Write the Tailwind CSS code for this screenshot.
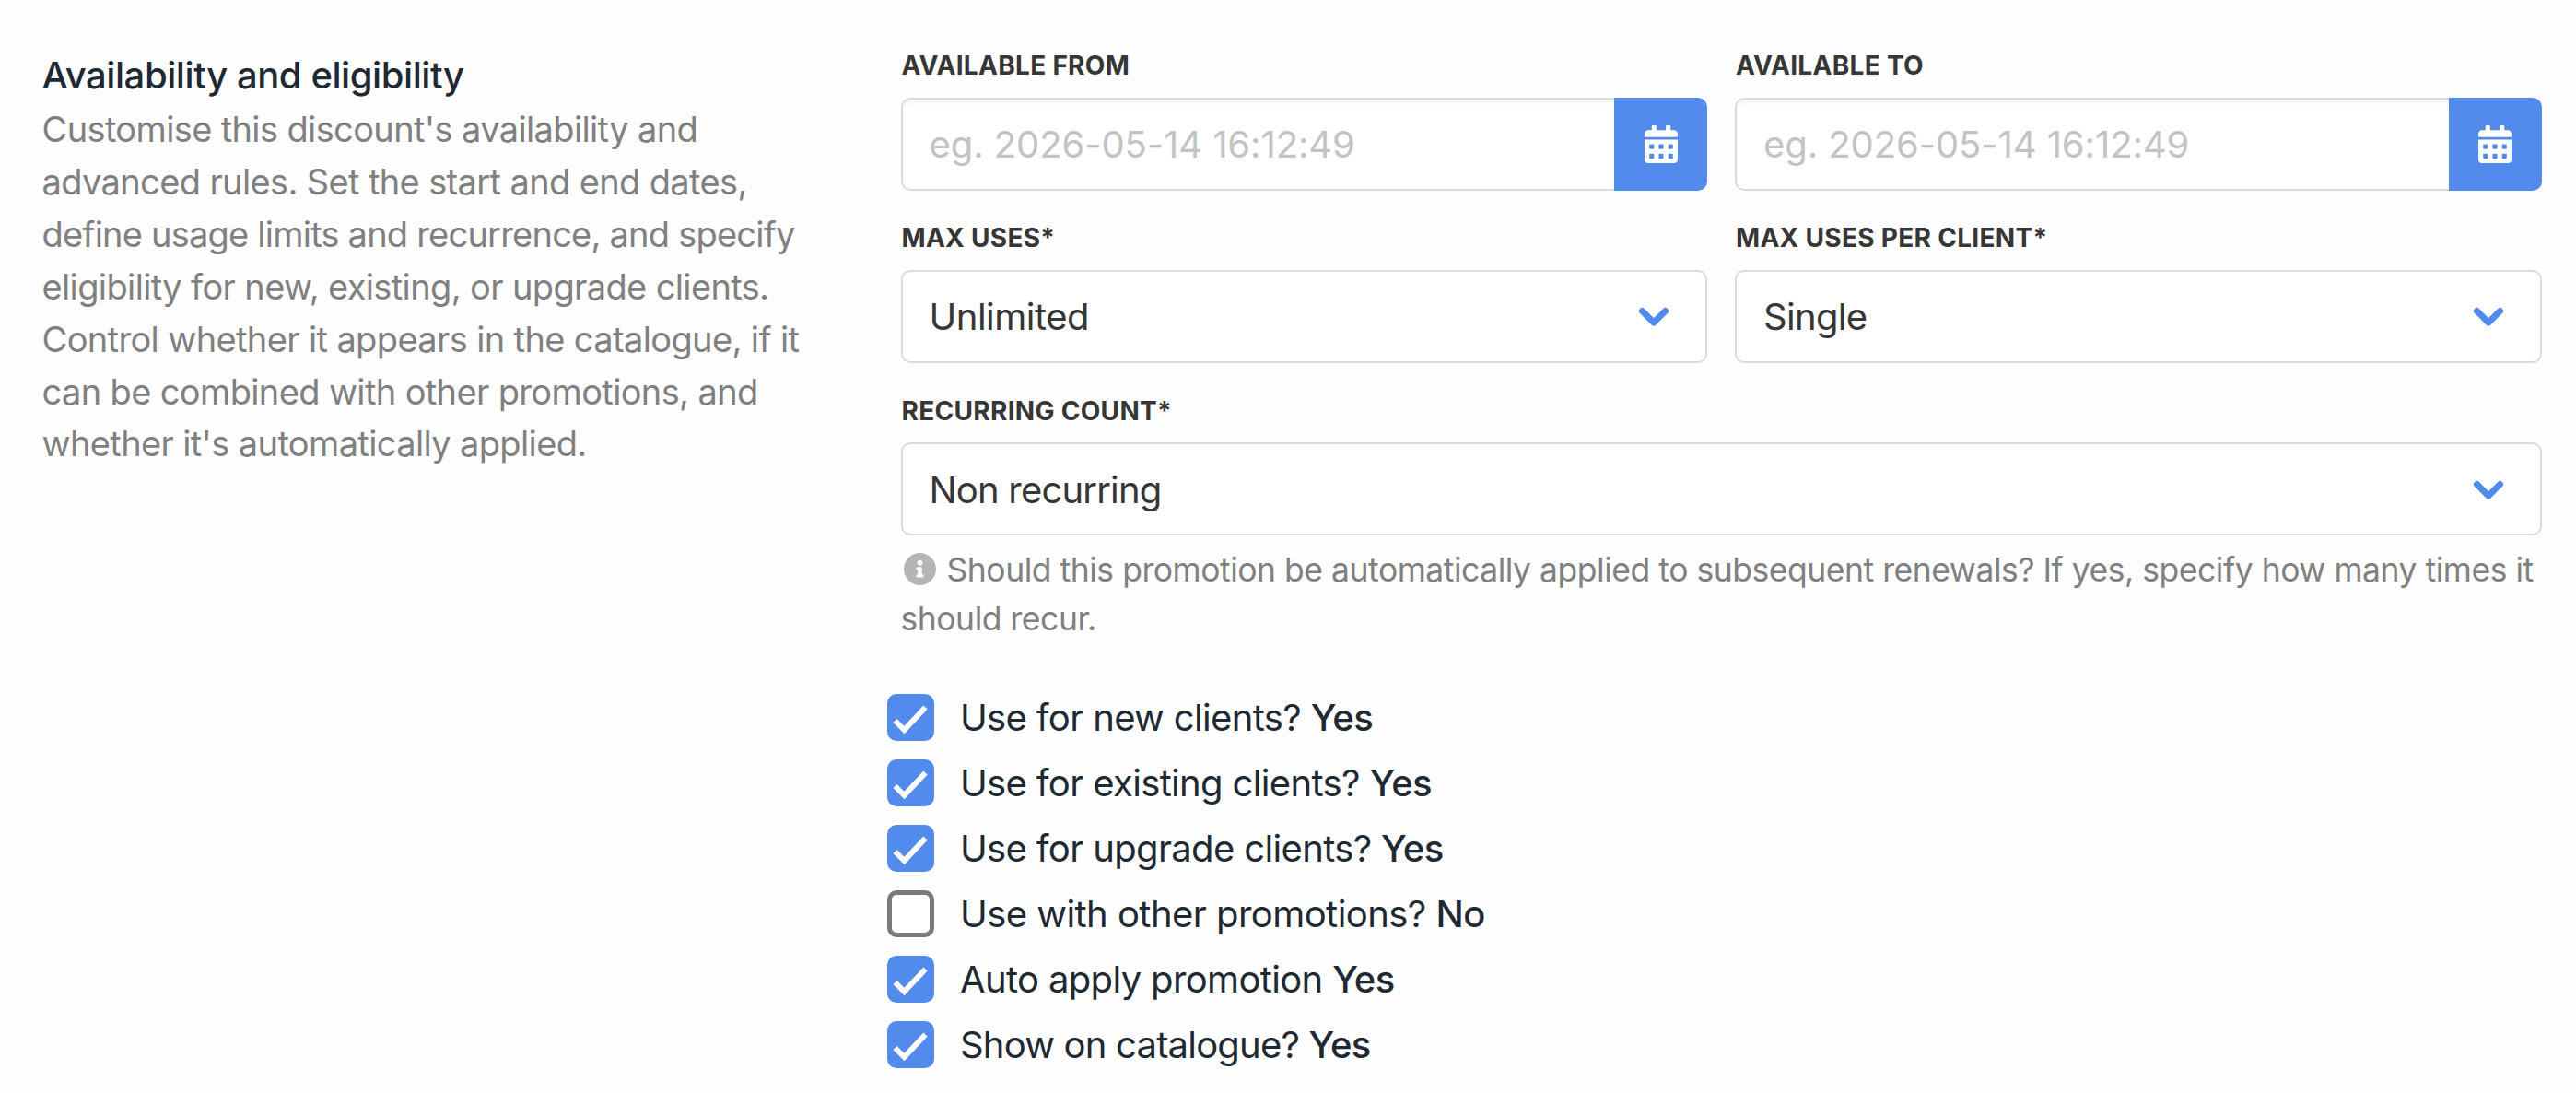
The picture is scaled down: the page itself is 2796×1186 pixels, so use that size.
<!DOCTYPE html>
<html lang="en">
<head>
    <meta charset="UTF-8">
    <meta name="viewport" content="width=device-width, initial-scale=1.0">
    <title>Availability and eligibility</title>
    <script src="https://cdn.jsdelivr.net/npm/@tailwindcss/browser@4"></script>
</head>
<body class="bg-[#fefefe] font-['Inter',sans-serif] antialiased">
    <svg class="hidden">
        <symbol id="calendar" viewBox="0 0 448 512">
            <path d="M0 464c0 26.5 21.5 48 48 48h352c26.5 0 48-21.5 48-48V192H0v272zm320-196c0-6.6 5.4-12 12-12h40c6.6 0 12 5.4 12 12v40c0 6.6-5.4 12-12 12h-40c-6.6 0-12-5.4-12-12v-40zm0 128c0-6.6 5.4-12 12-12h40c6.6 0 12 5.4 12 12v40c0 6.6-5.4 12-12 12h-40c-6.6 0-12-5.4-12-12v-40zM192 268c0-6.6 5.4-12 12-12h40c6.6 0 12 5.4 12 12v40c0 6.6-5.4 12-12 12h-40c-6.6 0-12-5.4-12-12v-40zm0 128c0-6.6 5.4-12 12-12h40c6.6 0 12 5.4 12 12v40c0 6.6-5.4 12-12 12h-40c-6.6 0-12-5.4-12-12v-40zM64 268c0-6.6 5.4-12 12-12h40c6.6 0 12 5.4 12 12v40c0 6.6-5.4 12-12 12H76c-6.6 0-12-5.4-12-12v-40zm0 128c0-6.6 5.4-12 12-12h40c6.6 0 12 5.4 12 12v40c0 6.6-5.4 12-12 12H76c-6.6 0-12-5.4-12-12v-40zM400 64h-48V16c0-8.8-7.2-16-16-16h-32c-8.8 0-16 7.2-16 16v48H160V16c0-8.8-7.2-16-16-16h-32c-8.8 0-16 7.2-16 16v48H48C21.5 64 0 85.5 0 112v48h448v-48c0-26.5-21.5-48-48-48z"/>
        </symbol>
        <symbol id="chevron" viewBox="0 0 34 22">
            <path d="M4.500 4.500 17 17 29.500 4.500" fill="none" stroke="currentColor" stroke-width="7" stroke-linecap="round" stroke-linejoin="round"/>
        </symbol>
        <symbol id="check" viewBox="0 0 51 51">
            <path d="M8.500 29 18.500 39 41.500 14.500" fill="none" stroke="currentColor" stroke-width="6"/>
        </symbol>
    </svg>

    <div class="flex h-[1186px] pl-[45.5px] pr-[37.5px]">
        <div class="w-[932px] shrink-0 pt-[53px]">
            <h2 class="text-[40px] leading-[57px] font-medium tracking-[-0.43px] text-[#1f2933]">Availability and eligibility</h2>
            <p class="pt-[2px] text-[38px] leading-[56.9px] tracking-[-0.63px] text-[#808080]">
                Customise this discount's availability and<br>
                advanced rules. Set the start and end dates,<br>
                <span class="tracking-[-0.78px]">define usage limits and recurrence, and specify</span><br>
                eligibility for new, existing, or upgrade clients.<br>
                Control whether it appears in the catalogue, if it<br>
                can be combined with other promotions, and<br>
                whether it's automatically applied.
            </p>
        </div>

        <div class="flex-1">
            <div class="grid grid-cols-2 gap-x-[30px] pt-[51px]">
                <div class="h-[187.3px]">
                    <label class="block h-[54.5px] pl-[1px] text-[28px] leading-[41px] font-bold tracking-[0.3px] text-[#363636]">AVAILABLE FROM</label>
                    <div class="flex h-[101px]">
                        <div class="flex flex-1 items-center rounded-l-[10px] border-2 border-r-0 border-[#dbdbdb] bg-white pt-[2px] pl-[29px] text-[40px] tracking-[-0.1px] text-[#c3c3c3] shadow-[inset_0_3px_5px_rgba(10,10,10,0.05)]">eg. 2026-05-14 16:12:49</div>
                        <button class="flex w-[101px] items-center justify-center rounded-r-[10px] bg-[#528bec] text-white"><svg class="h-[41px] w-[36px] fill-current"><use href="#calendar"/></svg></button>
                    </div>
                </div>
                <div class="h-[187.3px]">
                    <label class="block h-[54.5px] pl-[1px] text-[28px] leading-[41px] font-bold tracking-[0.3px] text-[#363636]">AVAILABLE TO</label>
                    <div class="flex h-[101px]">
                        <div class="flex flex-1 items-center rounded-l-[10px] border-2 border-r-0 border-[#dbdbdb] bg-white pt-[2px] pl-[29px] text-[40px] tracking-[-0.1px] text-[#c3c3c3] shadow-[inset_0_3px_5px_rgba(10,10,10,0.05)]">eg. 2026-05-14 16:12:49</div>
                        <button class="flex w-[101px] items-center justify-center rounded-r-[10px] bg-[#528bec] text-white"><svg class="h-[41px] w-[36px] fill-current"><use href="#calendar"/></svg></button>
                    </div>
                </div>
                <div class="h-[187.3px]">
                    <label class="block h-[54.5px] pl-[1px] text-[28px] leading-[41px] font-bold tracking-[0.3px] text-[#363636]">MAX USES*</label>
                    <div class="flex h-[101px] items-center justify-between rounded-[10px] border-2 border-[#dbdbdb] bg-white pt-[2px] pr-[39px] pl-[29px] text-[40px] tracking-[-0.5px] text-[#363636]">
                        Unlimited<svg class="h-[22px] w-[34px] text-[#528bec]"><use href="#chevron"/></svg>
                    </div>
                </div>
                <div class="h-[187.3px]">
                    <label class="block h-[54.5px] pl-[1px] text-[28px] leading-[41px] font-bold tracking-[0.3px] text-[#363636]">MAX USES PER CLIENT*</label>
                    <div class="flex h-[101px] items-center justify-between rounded-[10px] border-2 border-[#dbdbdb] bg-white pt-[2px] pr-[39px] pl-[29px] text-[40px] tracking-[-0.7px] text-[#363636]">
                        Single<svg class="h-[22px] w-[34px] text-[#528bec]"><use href="#chevron"/></svg>
                    </div>
                </div>
                <div class="col-span-2">
                    <label class="block h-[54.5px] pl-[1px] text-[28px] leading-[41px] font-bold tracking-[0.3px] text-[#363636]">RECURRING COUNT*</label>
                    <div class="flex h-[101px] items-center justify-between rounded-[10px] border-2 border-[#dbdbdb] bg-white pt-[2px] pr-[39px] pl-[29px] text-[40px] tracking-[-0.8px] text-[#363636]">
                        Non recurring<svg class="h-[22px] w-[34px] text-[#528bec]"><use href="#chevron"/></svg>
                    </div>
                    <div class="pt-[10.5px] text-[35.5px] leading-[53.3px] tracking-[-0.47px] whitespace-nowrap text-[#808080]">
                        <svg class="mr-[12px] ml-[3px] inline-block size-[35px] align-[-4px] text-[#b5b5b5]" viewBox="8 8 496 496" fill="currentColor"><path d="M256 8C119.043 8 8 119.083 8 256c0 136.997 111.043 248 248 248s248-111.003 248-248C504 119.083 392.957 8 256 8zm0 110c23.196 0 42 18.804 42 42s-18.804 42-42 42-42-18.804-42-42 18.804-42 42-42zm56 254c0 6.627-5.373 12-12 12h-88c-6.627 0-12-5.373-12-12v-24c0-6.627 5.373-12 12-12h12v-64h-12c-6.627 0-12-5.373-12-12v-24c0-6.627 5.373-12 12-12h64c6.627 0 12 5.373 12 12v100h12c6.627 0 12 5.373 12 12v24z"/></svg>Should this promotion be automatically applied to subsequent renewals? If yes, specify how many times it<br>
                        should recur.
                    </div>
                </div>
            </div>

            <div class="-ml-[15px] pt-[45px] text-[40px] leading-[71px] tracking-[-0.65px] text-[#1f2933]">
                <div class="flex h-[71px] items-center">
                    <span class="mr-[28.5px] size-[51px] rounded-[10px] bg-[#528bec] text-white"><svg class="size-full"><use href="#check"/></svg></span>
                    <span>Use for new clients? <span class="font-medium">Yes</span></span>
                </div>
                <div class="flex h-[71px] items-center">
                    <span class="mr-[28.5px] size-[51px] rounded-[10px] bg-[#528bec] text-white"><svg class="size-full"><use href="#check"/></svg></span>
                    <span>Use for existing clients? <span class="font-medium">Yes</span></span>
                </div>
                <div class="flex h-[71px] items-center">
                    <span class="mr-[28.5px] size-[51px] rounded-[10px] bg-[#528bec] text-white"><svg class="size-full"><use href="#check"/></svg></span>
                    <span>Use for upgrade clients? <span class="font-medium">Yes</span></span>
                </div>
                <div class="flex h-[71px] items-center">
                    <span class="mr-[28.5px] size-[51px] rounded-[10px] border-[5px] border-[#7a7a7a] bg-white"></span>
                    <span class="tracking-[-0.55px]">Use with other promotions? <span class="font-medium">No</span></span>
                </div>
                <div class="flex h-[71px] items-center">
                    <span class="mr-[28.5px] size-[51px] rounded-[10px] bg-[#528bec] text-white"><svg class="size-full"><use href="#check"/></svg></span>
                    <span>Auto apply promotion <span class="font-medium">Yes</span></span>
                </div>
                <div class="flex h-[71px] items-center">
                    <span class="mr-[28.5px] size-[51px] rounded-[10px] bg-[#528bec] text-white"><svg class="size-full"><use href="#check"/></svg></span>
                    <span class="tracking-[-0.8px]">Show on catalogue? <span class="font-medium">Yes</span></span>
                </div>
            </div>
        </div>
    </div>
</body>
</html>
